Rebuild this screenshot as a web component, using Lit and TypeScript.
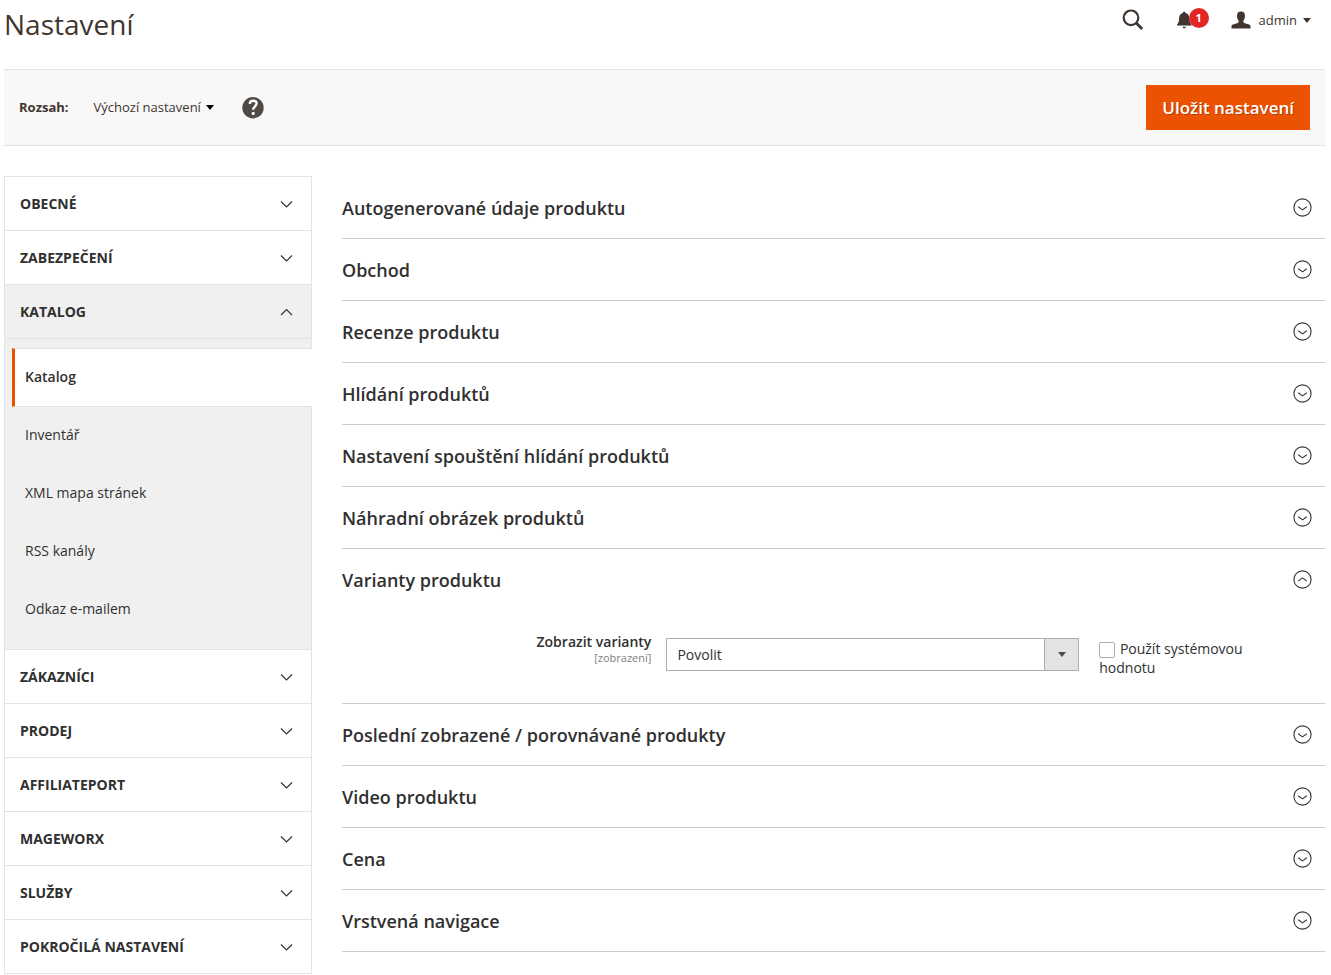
import { LitElement, html, css, svg, nothing } from "lit";
import { customElement, state } from "lit/decorators.js";
import { classMap } from "lit/directives/class-map.js";

interface NavGroup {
  id: string;
  label: string;
  items?: string[];
}

interface Section {
  id: string;
  label: string;
}

const NAV: NavGroup[] = [
  { id: "general", label: "Obecné" },
  { id: "security", label: "Zabezpečení" },
  {
    id: "catalog",
    label: "Katalog",
    items: ["Katalog", "Inventář", "XML mapa stránek", "RSS kanály", "Odkaz e-mailem"],
  },
  { id: "customers", label: "Zákazníci" },
  { id: "sales", label: "Prodej" },
  { id: "affiliate", label: "Affiliateport" },
  { id: "mageworx", label: "Mageworx" },
  { id: "services", label: "Služby" },
  { id: "advanced", label: "Pokročilá nastavení" },
];

const SECTIONS: Section[] = [
  { id: "autogenerated", label: "Autogenerované údaje produktu" },
  { id: "storefront", label: "Obchod" },
  { id: "review", label: "Recenze produktu" },
  { id: "alerts", label: "Hlídání produktů" },
  { id: "alerts-cron", label: "Nastavení spouštění hlídání produktů" },
  { id: "placeholder", label: "Náhradní obrázek produktů" },
  { id: "variants", label: "Varianty produktu" },
  { id: "recent", label: "Poslední zobrazené / porovnávané produkty" },
  { id: "video", label: "Video produktu" },
  { id: "price", label: "Cena" },
  { id: "layered", label: "Vrstvená navigace" },
];

const caret = html`<svg class="caret" width="8" height="5" viewBox="0 0 8 5" aria-hidden="true">
  <path d="M0 0h8L4 5z" fill="currentColor" />
</svg>`;

const chevron = (open: boolean) => html`<svg width="13" height="8" viewBox="0 0 13 8" aria-hidden="true">
  ${open
    ? svg`<path d="M1 7l5.5-5.4L12 7" fill="none" stroke="#333" stroke-width="1.2" />`
    : svg`<path d="M1 1.500l5.500 5.400L12 1.500" fill="none" stroke="#333" stroke-width="1.2" />`}
</svg>`;

const roundChevron = (open: boolean) => html`<svg width="19" height="19" viewBox="0 0 19 19" aria-hidden="true">
  <circle cx="9.5" cy="9.5" r="8.6" fill="none" stroke="#333" stroke-width="1.1" />
  ${open
    ? svg`<path d="M5.2 11.1l4.3-3.2 4.3 3.2" fill="none" stroke="#333" stroke-width="1.1" />`
    : svg`<path d="M5.2 8.7l4.3 3.2 4.3-3.2" fill="none" stroke="#333" stroke-width="1.1" />`}
</svg>`;

@customElement("app-root")
export class AppRoot extends LitElement {
  @state() private openGroup = "catalog";
  @state() private openSection = "variants";

  static styles = css`
    :host {
      display: block;
      padding: 0 6px 0 4px;
      background: #fff;
      color: #303030;
      font-family: "Open Sans", "Noto Sans", sans-serif;
      font-size: 14px;
      line-height: 19px;
    }
    * {
      box-sizing: border-box;
    }
    button,
    select {
      margin: 0;
      padding: 0;
      border: 0;
      border-radius: 0;
      background: none;
      color: inherit;
      font: inherit;
      cursor: pointer;
    }
    svg {
      display: block;
      flex: none;
    }
    .header {
      display: flex;
      justify-content: space-between;
      align-items: flex-start;
      height: 69px;
      color: #41362f;
    }
    .title {
      margin: 0;
      font-size: 28px;
      line-height: 48px;
      font-weight: 400;
    }
    .actions {
      display: flex;
      align-items: center;
      height: 40px;
      padding-right: 14px;
    }
    .bell {
      position: relative;
      display: flex;
      width: 32px;
      margin: 0 22px 0 33px;
    }
    .badge {
      position: absolute;
      top: -3px;
      right: 0;
      width: 20px;
      height: 20px;
      border-radius: 10px;
      background: #e22626;
      color: #fff;
      font-size: 11px;
      line-height: 20px;
      font-weight: 700;
      text-align: center;
    }
    .account {
      display: flex;
      align-items: center;
      font-size: 13px;
    }
    .account-name {
      margin: 0 6px 0 8px;
    }
    .toolbar {
      display: flex;
      align-items: center;
      padding: 15px;
      margin-bottom: 30px;
      border: solid #e3e3e3;
      border-width: 1px 0;
      background: #f8f8f8;
      color: #41362f;
      font-size: 13px;
    }
    .scope-label {
      font-weight: 700;
    }
    .scope {
      display: flex;
      align-items: center;
      gap: 5px;
      margin: 0 28px 0 25px;
    }
    .scope .caret {
      color: #000;
    }
    .save {
      height: 45px;
      margin-left: auto;
      padding: 0 16px;
      background: #eb5202;
      color: #fff;
      font-size: 17px;
      font-weight: 600;
      text-shadow: 1px 1px 0 rgba(0, 0, 0, 0.25);
    }
    .columns {
      display: grid;
      grid-template-columns: 308px minmax(0, 1fr);
      gap: 30px;
      align-items: start;
    }
    .nav {
      border: solid #e3e3e3;
      border-width: 1px 1px 0;
    }
    .group {
      border-bottom: 1px solid #e3e3e3;
    }
    .group.open {
      background: #f0f0f0;
    }
    .group-title {
      display: flex;
      align-items: center;
      justify-content: space-between;
      width: 100%;
      height: 53px;
      padding: 0 18px 0 15px;
      font-weight: 700;
      text-transform: uppercase;
    }
    .items {
      margin: 0;
      padding: 9px 0 10px 7px;
      border-top: 1px solid #e3e3e3;
      list-style: none;
    }
    .item {
      display: block;
      padding: 18px 0 21px 13px;
      color: inherit;
      text-decoration: none;
    }
    .item.current {
      margin-right: -1px;
      padding: 18px 0 20px 10px;
      border: solid #e3e3e3;
      border-width: 1px 0;
      border-left: 3px solid #eb5202;
      background: #fff;
      font-weight: 600;
    }
    .sections {
      padding-top: 1px;
    }
    .section {
      border-bottom: 1px solid #ccc;
    }
    .section-heading {
      margin: 0;
      font-size: 18px;
      line-height: 24px;
      font-weight: 600;
    }
    .section-title {
      display: flex;
      align-items: center;
      justify-content: space-between;
      width: 100%;
      height: 61px;
      padding-right: 13px;
      text-align: left;
    }
    .field {
      display: grid;
      grid-template-columns: 33% 42% 18%;
      align-items: start;
      padding: 24px 0 26px;
    }
    .field-label {
      display: flex;
      flex-direction: column;
      padding-right: 15px;
      line-height: 16px;
      font-weight: 600;
      text-align: right;
    }
    .field-scope {
      color: #808080;
      font-size: 11px;
      line-height: 15px;
      font-weight: 400;
    }
    .select {
      position: relative;
      margin-top: 4px;
    }
    .select select {
      display: block;
      width: 100%;
      height: 33px;
      padding: 0 44px 0 10px;
      border: 1px solid #adadad;
      background: #fff;
      appearance: none;
    }
    .select-arrow {
      position: absolute;
      inset: 0 0 0 auto;
      display: grid;
      place-items: center;
      width: 35px;
      border: 1px solid #adadad;
      background: #e3e3e3;
      color: #514943;
      pointer-events: none;
    }
    .inherit {
      padding: 5px 0 0 20px;
    }
    .inherit input {
      appearance: none;
      width: 16px;
      height: 16px;
      margin: 0 1px 0 0;
      border: 1px solid #adadad;
      border-radius: 2px;
      background: #fff;
      vertical-align: -4px;
    }
  `;

  private renderGroup(group: NavGroup) {
    const open = group.id === this.openGroup;
    return html`<div class=${classMap({ group: true, open })}>
      <button
        class="group-title"
        type="button"
        aria-expanded=${open}
        @click=${() => (this.openGroup = open ? "" : group.id)}
      >
        ${group.label} ${chevron(open)}
      </button>
      ${open && group.items
        ? html`<ul class="items">
            ${group.items.map(
              (item, i) => html`<li>
                <a class=${classMap({ item: true, current: i === 0 })} href="#">${item}</a>
              </li>`
            )}
          </ul>`
        : nothing}
    </div>`;
  }

  private renderVariants() {
    return html`<div class="field">
      <label class="field-label" for="display-variants">
        Zobrazit varianty
        <span class="field-scope">[zobrazení]</span>
      </label>
      <div class="select">
        <select id="display-variants">
          <option selected>Povolit</option>
          <option>Zakázat</option>
        </select>
        <span class="select-arrow">${caret}</span>
      </div>
      <div class="inherit">
        <input type="checkbox" id="use-default" />
        <label for="use-default">Použít systémovou hodnotu</label>
      </div>
    </div>`;
  }

  private renderSection(section: Section) {
    const open = section.id === this.openSection;
    return html`<section class="section">
      <h2 class="section-heading">
        <button
          class="section-title"
          type="button"
          aria-expanded=${open}
          @click=${() => (this.openSection = open ? "" : section.id)}
        >
          ${section.label} ${roundChevron(open)}
        </button>
      </h2>
      ${open && section.id === "variants" ? this.renderVariants() : nothing}
    </section>`;
  }

  render() {
    return html`
      <header class="header">
        <h1 class="title">Nastavení</h1>
        <div class="actions">
          <button type="button" aria-label="Hledat">
            <svg width="22" height="22" viewBox="0 0 22 22" aria-hidden="true">
              <circle cx="9" cy="8.8" r="7.3" fill="none" stroke="#41362f" stroke-width="2.2" />
              <path d="M14.2 14l6 6" stroke="#41362f" stroke-width="2.8" />
            </svg>
          </button>
          <button class="bell" type="button" aria-label="Upozornění">
            <svg width="18" height="18" viewBox="0 0 18 18" aria-hidden="true">
              <path
                d="M7.200.8c.8 0 1.300.5 1.400 1.200 2.400.6 3.600 2.600 3.700 5.200.1 3.400.9 5 2.300 6.300v1H0v-1c1.400-1.300 2-2.900 2.100-6.300.1-2.600 1.300-4.600 3.700-5.200C5.900 1.300 6.400.8 7.200.8z"
                fill="#41362f"
              />
              <path d="M5.500 15.800h3.400c-.2 1-.9 1.500-1.700 1.500s-1.500-.5-1.700-1.500z" fill="#41362f" />
            </svg>
            <span class="badge">1</span>
          </button>
          <button class="account" type="button">
            <svg width="20" height="18" viewBox="0 0 20 18" aria-hidden="true">
              <path
                d="M10 .5c2.700 0 4 1.500 4 4.200 0 1.900-.6 3.700-1.600 4.700-.3 1.800.2 2.400 1.600 2.800l4 1.300c1 .3 1.500.9 1.500 1.800v2.200H.5v-2.200c0-.9.5-1.500 1.500-1.800l4-1.300c1.400-.4 1.900-1 1.600-2.800-1-1-1.600-2.800-1.600-4.700C6 2 7.300.5 10 .5z"
                fill="#41362f"
              />
            </svg>
            <span class="account-name">admin</span>
            ${caret}
          </button>
        </div>
      </header>

      <div class="toolbar">
        <span class="scope-label" id="scope-label">Rozsah:</span>
        <button class="scope" type="button" aria-describedby="scope-label">Výchozí nastavení ${caret}</button>
        <button type="button" aria-label="Nápověda">
          <svg width="22" height="22" viewBox="0 0 22 22" aria-hidden="true">
            <circle cx="11" cy="10.700" r="10.700" fill="#514943" />
            <path
              d="M7.700 6.800C7.900 4.600 9.300 3.700 11.200 3.700c2 0 3.400 1.100 3.400 2.900 0 2.700-3.400 2.900-3.400 6.200"
              fill="none"
              stroke="#fff"
              stroke-width="2.400"
            />
            <circle cx="11.200" cy="16.400" r="1.600" fill="#fff" />
          </svg>
        </button>
        <button class="save" type="button">Uložit nastavení</button>
      </div>

      <div class="columns">
        <nav class="nav">${NAV.map((group) => this.renderGroup(group))}</nav>
        <main class="sections">${SECTIONS.map((section) => this.renderSection(section))}</main>
      </div>
    `;
  }
}
